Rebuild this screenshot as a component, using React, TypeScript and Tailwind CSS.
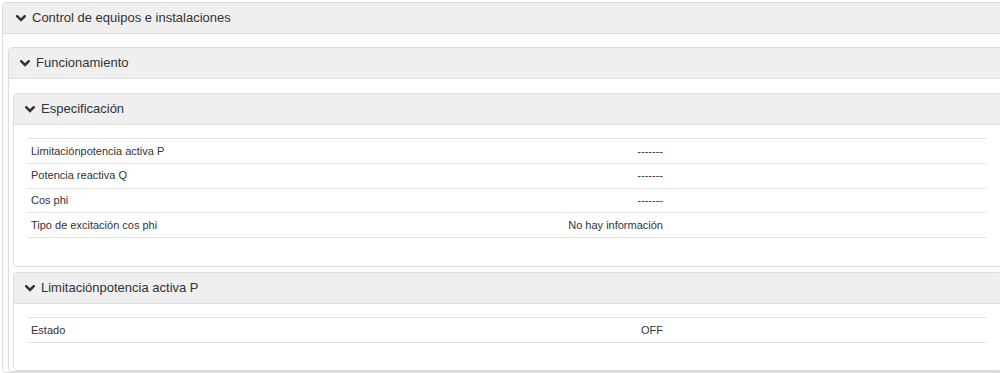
import type { ReactNode } from "react";

const Chevron = () => (
  <svg width="10" height="7" viewBox="0 0 10 7" className="shrink-0">
    <polyline
      points="1.3,1.3 5,5 8.7,1.3"
      fill="none"
      stroke="#333"
      strokeWidth="2.6"
      strokeLinecap="square"
    />
  </svg>
);

function Panel({
  title,
  headerPad,
  className,
  children,
}: {
  title: string;
  headerPad: string;
  className?: string;
  children: ReactNode;
}) {
  return (
    <div className={`rounded-[4px] border border-[#dddddd] bg-white ${className ?? ""}`}>
      <div
        className={`flex h-[31px] items-center gap-[6px] rounded-t-[3px] border-b border-[#dddddd] bg-[#efefef] ${headerPad} text-[13px] text-[#333]`}
      >
        <Chevron />
        <span>{title}</span>
      </div>
      {children}
    </div>
  );
}

function SpecTable({ rows, bottom }: { rows: [string, string][]; bottom: string }) {
  return (
    <div className={`mx-[14px] mt-[13px] ${bottom} border-t border-[#e3e3e3]`}>
      {rows.map(([label, value]) => (
        <div
          key={label}
          className="grid h-[24.75px] grid-cols-[470px_171px_1fr] items-center border-b border-[#e3e3e3] text-[11px] text-[#333]"
        >
          <span className="pl-[3px]">{label}</span>
          <span className="pr-[6px] text-right">{value}</span>
          <span />
        </div>
      ))}
    </div>
  );
}

export default function App() {
  return (
    <div
      className="h-[373px] w-[1000px] overflow-hidden bg-white pt-[2px] pl-[2px]"
      style={{ fontFamily: '"Liberation Sans", Arial, sans-serif' }}
    >
      <div className="w-[1011px]">
        <Panel title="Control de equipos e instalaciones" headerPad="pl-[13px]">
          <div className="px-[5px] pt-[13px]">
            <Panel title="Funcionamiento" headerPad="pl-[11px]">
              <div className="px-[4px] pt-[14px]">
                <Panel title="Especificación" headerPad="pl-[11px]">
                  <SpecTable
                    bottom="mb-[28px]"
                    rows={[
                      ["Limitaciónpotencia activa P", "-------"],
                      ["Potencia reactiva Q", "-------"],
                      ["Cos phi", "-------"],
                      ["Tipo de excitación cos phi", "No hay información"],
                    ]}
                  />
                </Panel>
                <Panel
                  title="Limitaciónpotencia activa P"
                  headerPad="pl-[11px]"
                  className="mt-[5px]"
                >
                  <SpecTable bottom="mb-[27px]" rows={[["Estado", "OFF"]]} />
                </Panel>
              </div>
            </Panel>
          </div>
        </Panel>
      </div>
    </div>
  );
}
